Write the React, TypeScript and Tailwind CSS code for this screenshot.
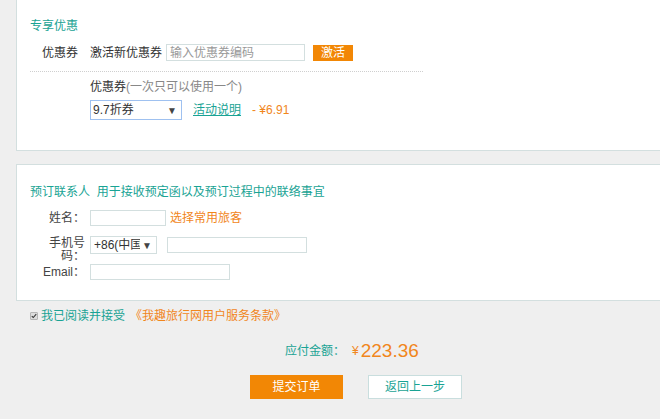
import React from 'react'

const TEAL = 'text-[#19a394]'
const ORANGE = 'text-[#f1861c]'

export default function App() {
  return (
    <div className="h-[419px] w-[660px] overflow-hidden bg-[#efefef] text-[12px] text-[#333] [font-family:'Liberation_Sans','Noto_Sans_CJK_SC',sans-serif]">
      {/* Coupon panel */}
      <div className="ml-[16px] h-[151px] w-[700px] border-b border-l border-[#d3dfdf] bg-white pl-[13px]">
        <div className={`pt-[19px] leading-[14px] ${TEAL}`}>专享优惠</div>

        <div className="mt-[11px] flex h-[17px] items-center">
          <span className="ml-[12px] w-[48px] leading-[14px]">优惠券</span>
          <span className="leading-[14px]">激活新优惠券</span>
          <div className="ml-[4px] flex h-[17px] w-[139px] items-center border border-[#d3dfdf] pl-[3px] text-[#999]">输入优惠券编码</div>
          <button className="ml-[8px] flex h-[16px] w-[40px] items-center justify-center bg-[#f28705] text-white">激活</button>
        </div>

        <div className="mt-[10px] w-[393px] border-t border-dotted border-[#cfcfcf]" />

        <div className="mt-[8px] pl-[60px] leading-[14px]">
          优惠券<span className="text-[#888]">(一次只可以使用一个)</span>
        </div>

        <div className="mt-[6px] flex items-center pl-[60px]">
          <div className="flex h-[20px] w-[92px] items-center justify-between border border-[#9fc1f0] pl-[2px] pr-[4px]">
            <span>9.7折券</span>
            <span className="text-[10px] text-[#444]">▼</span>
          </div>
          <a className={`ml-[11px] underline ${TEAL}`}>活动说明</a>
          <span className={`ml-[11px] ${ORANGE}`}>- ¥6.91</span>
        </div>
      </div>

      {/* Contact panel */}
      <div className="ml-[16px] mt-[13px] h-[137px] w-[700px] border-y border-l border-[#d3dfdf] bg-white pl-[13px]">
        <div className={`pt-[20px] leading-[14px] ${TEAL}`}>预订联系人&nbsp; 用于接收预定函以及预订过程中的联络事宜</div>

        <div className="mt-[11px] flex h-[16px] items-center">
          <Label>姓名：</Label>
          <div className="ml-[5px] h-[16px] w-[76px] border border-[#d3dfdf]" />
          <span className={`ml-[4px] ${ORANGE}`}>选择常用旅客</span>
        </div>

        <div className="mt-[10px] flex items-start">
          <Label className="mt-[1px]">手机号码：</Label>
          <div className="ml-[5px] flex h-[18px] w-[67px] items-center justify-between overflow-hidden border border-[#d3dfdf] pl-[3px] pr-[4px]">
            <span className="w-[46px] overflow-hidden whitespace-nowrap">+86(中国</span>
            <span className="text-[10px] text-[#444]">▼</span>
          </div>
          <div className="ml-[10px] mt-[1px] h-[16px] w-[140px] border border-[#d3dfdf]" />
        </div>

        <div className="mt-[1px] flex h-[16px] items-center">
          <Label>Email：</Label>
          <div className="ml-[5px] h-[16px] w-[140px] border border-[#d3dfdf]" />
        </div>
      </div>

      {/* Agreement */}
      <div className="mt-[8px] flex items-center pl-[30px] leading-[14px]">
        <span className="flex h-[8px] w-[8px] items-center justify-center rounded-[1px] border border-[#b5b5b5] bg-[#dcdcdc]">
          <svg viewBox="0 0 8 8" className="h-[6px] w-[6px]">
            <path d="M1 4.2 L3 6 L7 1.5" fill="none" stroke="#333" strokeWidth="1.4" />
          </svg>
        </span>
        <span className={`ml-[3px] ${TEAL}`}>我已阅读并接受</span>
        <span className={`ml-[5px] ${ORANGE}`}>《我趣旅行网用户服务条款》</span>
      </div>

      {/* Total */}
      <div className="mt-[15px] flex h-[24px] items-end pl-[285px]">
        <span className={`mb-[2px] ${TEAL}`}>应付金额：</span>
        <span className={`mb-[2px] ml-[7px] ${ORANGE}`}>¥</span>
        <span className={`ml-[2px] text-[19px] leading-[22px] ${ORANGE}`}>223.36</span>
      </div>

      {/* Actions */}
      <div className="mt-[13px] flex pl-[250px]">
        <button className="h-[24px] w-[93px] bg-[#f28705] text-white">提交订单</button>
        <button className={`ml-[25px] h-[24px] w-[94px] border border-[#c9dede] bg-white ${TEAL}`}>返回上一步</button>
      </div>
    </div>
  )
}

function Label({ children, className = '' }: { children: React.ReactNode; className?: string }) {
  return <div className={`ml-[13px] w-[42px] text-right leading-[13px] text-[#444] ${className}`}>{children}</div>
}
